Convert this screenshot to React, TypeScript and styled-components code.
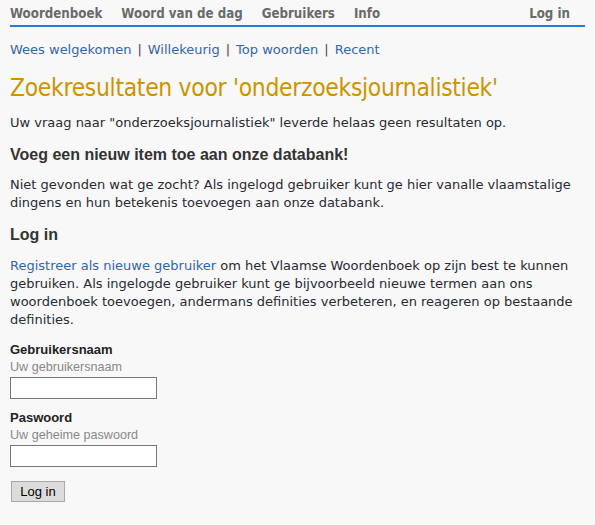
import React from "react";
import styled, { createGlobalStyle } from "styled-components";

const Global = createGlobalStyle`
  html, body { margin: 0; padding: 0; background: #f8f8f8; }
  body { font-family: "DejaVu Sans", Verdana, sans-serif; color: #2a2a33; }
`;

const Page = styled.div`
  padding: 0 10px;
  width: 575px;
`;

const TopNav = styled.nav`
  display: flex;
  align-items: center;
  border-bottom: 2px solid #1f7fd6;
  padding-top: 2px;
  box-sizing: border-box;
  height: 27px;
`;

const NavItem = styled.a<{ $right?: boolean }>`
  font-family: "DejaVu Sans Condensed", "DejaVu Sans", sans-serif;
  font-weight: bold;
  font-size: 13.2px;
  color: #6a6a6a;
  text-decoration: none;
  margin-right: 19px;
  ${(p) => (p.$right ? "margin-left: auto; margin-right: 15px;" : "")}
`;

const SubNav = styled.div`
  margin-top: 14px;
  font-size: 13px;
  line-height: 18px;
  color: #6b2a55;
`;

const Link = styled.a`
  color: #3565a8;
  text-decoration: none;
`;

const Sep = styled.span`
  color: #6b3060;
  margin: 0 6px;
`;

const Title = styled.h1`
  font-family: "DejaVu Sans Condensed", "DejaVu Sans", sans-serif;
  font-weight: normal;
  font-size: 24.4px;
  color: #cc9400;
  margin: 13px 0 0;
  line-height: 32px;
  letter-spacing: -0.3px;
`;

const Text = styled.p<{ $mt?: number }>`
  font-size: 13px;
  line-height: 18px;
  margin: ${(p) => p.$mt ?? 12}px 0 0;
`;

const Heading = styled.h2<{ $mt: number }>`
  font-family: "Liberation Sans", Arial, sans-serif;
  font-weight: bold;
  font-size: 16px;
  color: #333;
  margin: ${(p) => p.$mt}px 0 0;
  line-height: 22px;
`;

const Form = styled.form`
  margin-top: 11px;
  display: flex;
  flex-direction: column;
  align-items: flex-start;
`;

const Label = styled.label<{ $mt?: number }>`
  font-family: "Liberation Sans", Arial, sans-serif;
  font-weight: bold;
  font-size: 13px;
  color: #222;
  line-height: 19px;
  margin-top: ${(p) => p.$mt ?? 0}px;
`;

const Hint = styled.span`
  font-family: "Liberation Sans", Arial, sans-serif;
  font-size: 12.6px;
  color: #888;
  line-height: 17px;
`;

const Input = styled.input`
  width: 147px;
  height: 22px;
  box-sizing: border-box;
  border: 1px solid #767676;
  background: #fff;
  margin: 1px 0 0;
  padding: 1px 2px;
`;

const Button = styled.button`
  margin: 14px 0 0 1px;
  width: 54px;
  height: 21px;
  box-sizing: border-box;
  font-family: "Liberation Sans", Arial, sans-serif;
  font-size: 13px;
  color: #000;
  background: #dcdcdc;
  border: 1px solid #a8a8a8;
  padding: 0;
`;

export default function App() {
  return (
    <>
      <Global />
      <Page>
        <TopNav>
          <NavItem href="#">Woordenboek</NavItem>
          <NavItem href="#">Woord van de dag</NavItem>
          <NavItem href="#">Gebruikers</NavItem>
          <NavItem href="#">Info</NavItem>
          <NavItem href="#" $right>Log in</NavItem>
        </TopNav>
        <SubNav>
          <Link href="#">Wees welgekomen</Link>
          <Sep>|</Sep>
          <Link href="#">Willekeurig</Link>
          <Sep>|</Sep>
          <Link href="#">Top woorden</Link>
          <Sep>|</Sep>
          <Link href="#">Recent</Link>
        </SubNav>
        <Title>Zoekresultaten voor 'onderzoeksjournalistiek'</Title>
        <Text $mt={10}>
          Uw vraag naar "onderzoeksjournalistiek" leverde helaas geen resultaten op.
        </Text>
        <Heading $mt={12}>Voeg een nieuw item toe aan onze databank!</Heading>
        <Text $mt={10}>
          Niet gevonden wat ge zocht? Als ingelogd gebruiker kunt ge hier vanalle vlaamstalige
          dingens en hun betekenis toevoegen aan onze databank.
        </Text>
        <Heading $mt={12}>Log in</Heading>
        <Text $mt={11}>
          <Link href="#">Registreer als nieuwe gebruiker</Link> om het Vlaamse Woordenboek op
          zijn best te kunnen gebruiken. Als ingelogde gebruiker kunt ge bijvoorbeeld nieuwe
          termen aan ons woordenboek toevoegen, andermans definities verbeteren, en reageren op
          bestaande definities.
        </Text>
        <Form onSubmit={(e) => e.preventDefault()}>
          <Label>Gebruikersnaam</Label>
          <Hint>Uw gebruikersnaam</Hint>
          <Input type="text" />
          <Label $mt={9}>Paswoord</Label>
          <Hint>Uw geheime paswoord</Hint>
          <Input type="password" />
          <Button type="submit">Log in</Button>
        </Form>
      </Page>
    </>
  );
}
